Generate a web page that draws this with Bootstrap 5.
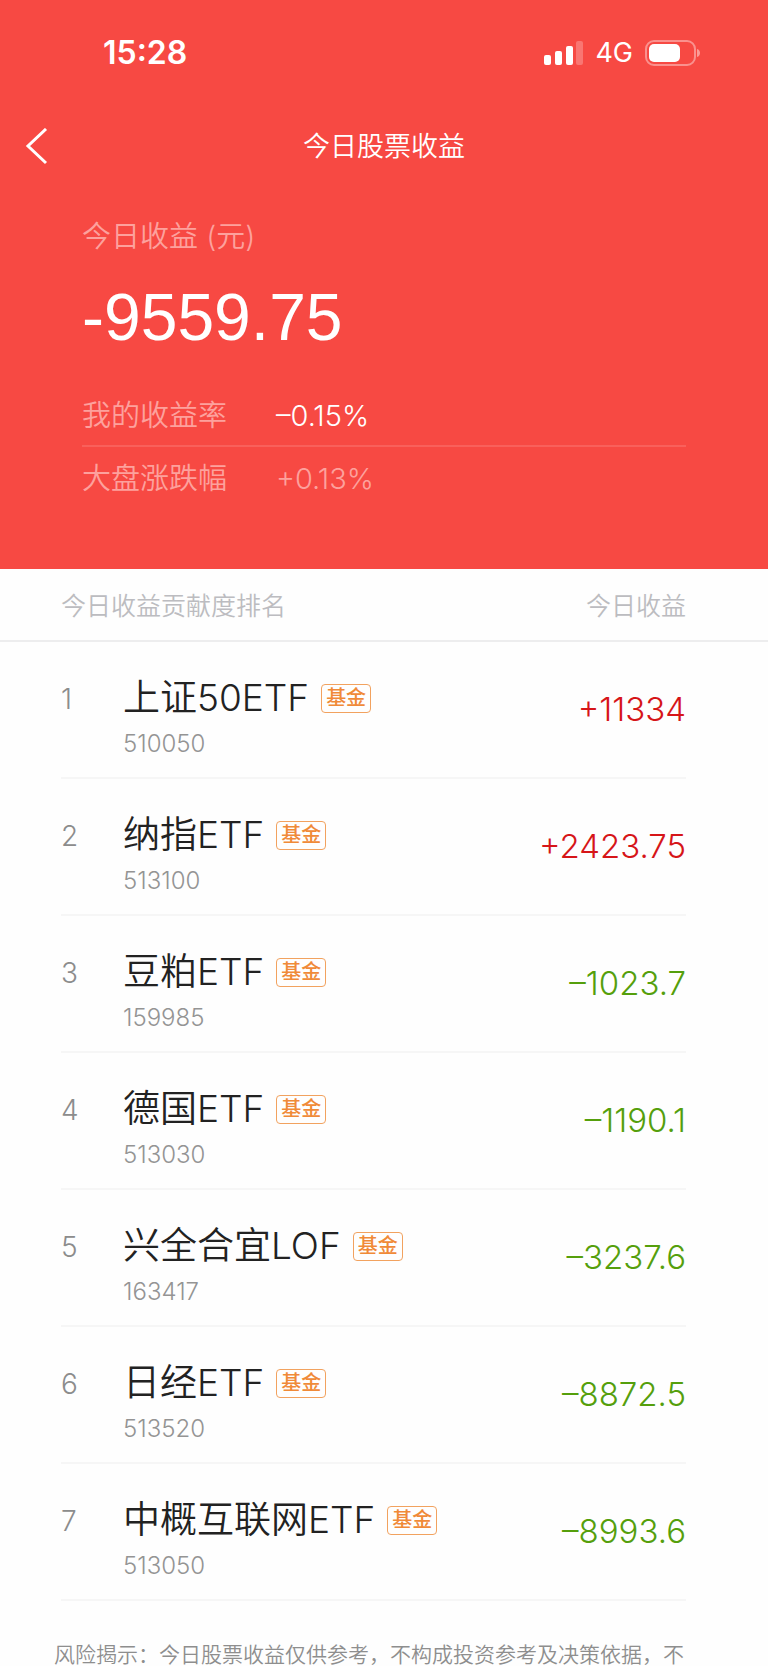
<!DOCTYPE html>
<html lang="zh-CN">
<head>
<meta charset="utf-8">
<meta name="viewport" content="width=device-width, initial-scale=1">
<title>今日股票收益</title>
<link href="https://cdn.jsdelivr.net/npm/bootstrap@5.3.0/dist/css/bootstrap.min.css" rel="stylesheet">
<style>
  body { font-family: Inter, "Noto Sans CJK SC", sans-serif; font-weight: 350; background: #fefefe; color: #222; }
  .hero { background: #f74943; color: #fff; padding-bottom: 61px; }
  .status { padding: 34px 66px 32px 103px; line-height: 38px; }
  .clock { font-size: 32px; font-weight: 600; }
  .carrier { font-size: 27px; font-weight: 400; margin: 0 12px; }
  .topnav { height: 86px; padding: 0 24px; }
  .topnav > * { flex: 1 1 0; }
  .back { background: none; border: 0; padding: 0; color: #fff; text-align: left; line-height: 0; }
  .page-title { font-size: 27px; font-weight: 350; line-height: 40px; }
  .summary { padding: 25px 82px 0; }
  .soft { color: #fda19d; }
  .caption { font-size: 29px; line-height: 44px; }
  .total { font-family: "Liberation Sans", Arial, sans-serif; font-size: 66px; font-weight: 400; line-height: 76px; margin: 20px 0 32px; }
  .rate { font-size: 29px; line-height: 58px; }
  .rate dt { font-weight: 350; width: 194px; }
  .rate + .rate { border-top: 2px solid #f9605b; padding-top: 3px; }
  .list-top { font-size: 25px; line-height: 30px; color: #bcbcc0; padding: 22px 82px 19px 61px; border-bottom: 2px solid #ededee; }
  .ranks { padding: 0 82px 0 61px; margin: 0; list-style: none; }
  .ranks li { border-bottom: 2px solid #f6f6f6; padding: 32px 0 18px; }
  .place { width: 62px; font-size: 28px; line-height: 50px; color: #8c8c8c; }
  .fund { font-size: 37px; font-weight: 350; line-height: 48px; }
  .tag { font-size: 20px; font-weight: 500; line-height: 27px; color: #f08a38; border: 1px solid #f2a25f; border-radius: 4px; padding: 0 4px; margin-left: 12px; }
  .code { font-size: 24px; line-height: 30px; margin-top: 7px; color: #949494; }
  .amount { font-size: 33px; line-height: 70px; }
  .up { color: #d61518; }
  .down { color: #559f0c; }
  .risk { font-size: 21px; line-height: 32px; color: #8e8e8e; padding: 38px 54px 0; margin: 0; height: 65px; overflow: hidden; }
</style>
</head>
<body>
<header class="hero">
  <div class="status d-flex align-items-center justify-content-between">
    <span class="clock">15:28</span>
    <div class="d-flex align-items-center">
      <svg width="40" height="26" viewBox="0 0 40 26" fill="#fff" aria-hidden="true">
        <rect x="1" y="15" width="7" height="10" rx="2"/><rect x="12" y="11" width="7" height="14" rx="2"/>
        <rect x="23" y="6" width="7" height="19" rx="2"/><rect x="33" y="1" width="7" height="24" rx="2" opacity=".25"/>
      </svg>
      <span class="carrier">4G</span>
      <svg width="57" height="26" viewBox="0 0 57 26" aria-hidden="true">
        <rect x="1" y="1" width="49" height="24" rx="8" fill="none" stroke="#fff" stroke-width="2" opacity=".4"/>
        <rect x="4" y="4" width="31" height="18" rx="5" fill="#fff"/>
        <path d="M52 9c4 1 4 7 0 8z" fill="#fff" opacity=".45"/>
      </svg>
    </div>
  </div>
  <nav class="topnav d-flex align-items-center">
    <button class="back" type="button" aria-label="返回">
      <svg width="26" height="38" viewBox="0 0 26 38" fill="none" stroke="#fff" stroke-width="3"><path d="M22 1 4 18l18 17"/></svg>
    </button>
    <h1 class="page-title text-center text-nowrap m-0">今日股票收益</h1>
    <span></span>
  </nav>
  <section class="summary">
    <div class="caption soft">今日收益 (元)</div>
    <div class="total">-9559.75</div>
    <dl class="m-0">
      <div class="rate d-flex"><dt class="soft">我的收益率</dt><dd class="m-0">–0.15%</dd></div>
      <div class="rate d-flex soft"><dt>大盘涨跌幅</dt><dd class="m-0">+0.13%</dd></div>
    </dl>
  </section>
</header>
<main>
  <div class="list-top d-flex justify-content-between"><span>今日收益贡献度排名</span><span>今日收益</span></div>
  <ol class="ranks">
    <li class="d-flex"><span class="place">1</span><div class="flex-grow-1"><div class="d-flex align-items-center"><h2 class="fund m-0">上证50ETF</h2><span class="tag">基金</span></div><div class="code">510050</div></div><span class="amount up">+11334</span></li>
    <li class="d-flex"><span class="place">2</span><div class="flex-grow-1"><div class="d-flex align-items-center"><h2 class="fund m-0">纳指ETF</h2><span class="tag">基金</span></div><div class="code">513100</div></div><span class="amount up">+2423.75</span></li>
    <li class="d-flex"><span class="place">3</span><div class="flex-grow-1"><div class="d-flex align-items-center"><h2 class="fund m-0">豆粕ETF</h2><span class="tag">基金</span></div><div class="code">159985</div></div><span class="amount down">–1023.7</span></li>
    <li class="d-flex"><span class="place">4</span><div class="flex-grow-1"><div class="d-flex align-items-center"><h2 class="fund m-0">德国ETF</h2><span class="tag">基金</span></div><div class="code">513030</div></div><span class="amount down">–1190.1</span></li>
    <li class="d-flex"><span class="place">5</span><div class="flex-grow-1"><div class="d-flex align-items-center"><h2 class="fund m-0">兴全合宜LOF</h2><span class="tag">基金</span></div><div class="code">163417</div></div><span class="amount down">–3237.6</span></li>
    <li class="d-flex"><span class="place">6</span><div class="flex-grow-1"><div class="d-flex align-items-center"><h2 class="fund m-0">日经ETF</h2><span class="tag">基金</span></div><div class="code">513520</div></div><span class="amount down">–8872.5</span></li>
    <li class="d-flex"><span class="place">7</span><div class="flex-grow-1"><div class="d-flex align-items-center"><h2 class="fund m-0">中概互联网ETF</h2><span class="tag">基金</span></div><div class="code">513050</div></div><span class="amount down">–8993.6</span></li>
  </ol>
  <p class="risk text-nowrap">风险揭示：今日股票收益仅供参考，不构成投资参考及决策依据，不</p>
</main>
<script src="https://cdn.jsdelivr.net/npm/bootstrap@5.3.0/dist/js/bootstrap.bundle.min.js"></script>
</body>
</html>
